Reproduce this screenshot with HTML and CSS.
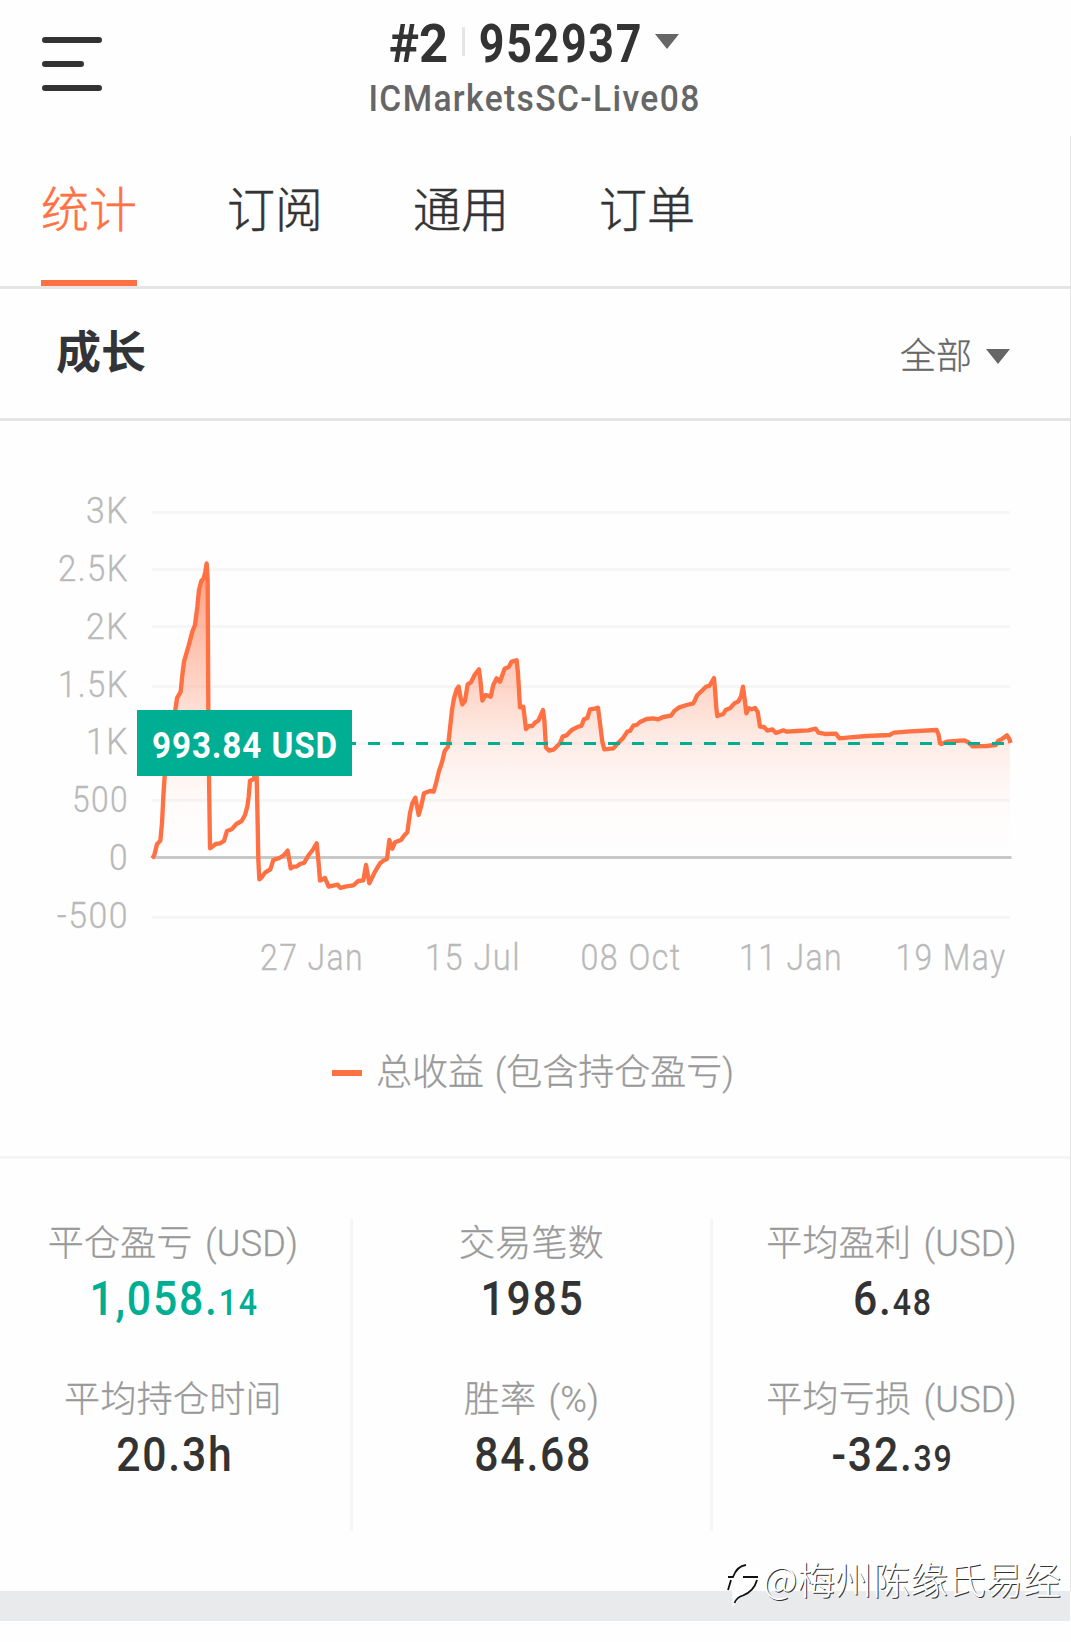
FILE: index.html
```html
<!DOCTYPE html>
<html lang="zh-CN">
<head>
    <meta charset="UTF-8">
    <meta name="viewport" content="width=device-width, initial-scale=1.0">
    <title>ICMarketsSC-Live08</title>
    <link rel="stylesheet" href="styles.css">
</head>
<body>
    <header class="topbar">
        <svg class="menu-icon" width="60" height="54" viewBox="0 0 60 54">
            <path d="M3 3H57M3 27H39M3 51H57"/>
        </svg>
        <div class="account">
            <h1 class="account-title">
                <span class="rank"><span class="din">#2</span></span>
                <i class="bar"></i>
                <span class="number"><span class="din">952937</span></span>
                <svg class="arrow" width="24" height="15" viewBox="0 0 24 15"><path d="M0 0H24L12 15Z"/></svg>
            </h1>
            <p class="server"><span class="din">ICMarketsSC-Live08</span></p>
        </div>
    </header>
    <main>
        <nav class="tabs">
            <a class="tab active">统计</a>
            <a class="tab">订阅</a>
            <a class="tab">通用</a>
            <a class="tab">订单</a>
        </nav>
        <section class="growth-head">
            <h2>成长</h2>
            <div class="period">
                <span>全部</span>
                <svg class="arrow" width="24" height="15" viewBox="0 0 24 15"><path d="M0 0H24L12 15Z"/></svg>
            </div>
        </section>
        <section class="growth">
            <svg class="chart" width="1070" height="579" viewBox="0 421 1070 579">
                <defs>
                    <linearGradient id="fade" gradientUnits="userSpaceOnUse" x1="0" y1="70" x2="0" y2="952">
                        <stop offset="0" stop-color="#ff7143" stop-opacity=".68"/>
                        <stop offset=".3" stop-color="#ff7143" stop-opacity=".4"/>
                        <stop offset=".6" stop-color="#ff7143" stop-opacity=".13"/>
                        <stop offset=".82" stop-color="#ff7143" stop-opacity=".02"/>
                        <stop offset="1" stop-color="#ff7143" stop-opacity="0"/>
                    </linearGradient>
                    <clipPath id="above"><rect x="330" y="0" width="2580" height="952"/></clipPath>
                </defs>
                <path class="grid" d="M152 512.5H1010M152 569.5H1010M152 626.5H1010M152 686.5H1010M152 743.5H1010M152 800.5H1010M152 917.5H1010"/>
                <path class="zero" d="M152 857.5H1011.5"/>
                <g class="axis axis-y">
                    <text x="129" y="523" textLength="43" lengthAdjust="spacingAndGlyphs">3K</text>
                    <text x="129" y="581" textLength="71" lengthAdjust="spacingAndGlyphs">2.5K</text>
                    <text x="129" y="639" textLength="43" lengthAdjust="spacingAndGlyphs">2K</text>
                    <text x="129" y="697" textLength="71" lengthAdjust="spacingAndGlyphs">1.5K</text>
                    <text x="129" y="754" textLength="43" lengthAdjust="spacingAndGlyphs">1K</text>
                    <text x="129" y="812" textLength="57" lengthAdjust="spacingAndGlyphs">500</text>
                    <text x="129" y="870" textLength="20" lengthAdjust="spacingAndGlyphs">0</text>
                    <text x="129" y="928" textLength="72" lengthAdjust="spacingAndGlyphs">-500</text>
                </g>
                <g class="axis axis-x">
                    <text x="312" y="970" textLength="104" lengthAdjust="spacingAndGlyphs">27 Jan</text>
                    <text x="473" y="970" textLength="96" lengthAdjust="spacingAndGlyphs">15 Jul</text>
                    <text x="631" y="970" textLength="101" lengthAdjust="spacingAndGlyphs">08 Oct</text>
                    <text x="791" y="970" textLength="104" lengthAdjust="spacingAndGlyphs">11 Jan</text>
                    <text x="951" y="970" textLength="111" lengthAdjust="spacingAndGlyphs">19 May</text>
                </g>
                <g transform="translate(40 540) scale(.33333)">
                    <path id="area" clip-path="url(#above)" fill="url(#fade)"/>
                    <path id="line" class="line"/>
                </g>
                <path class="current" d="M344 743.5H1005"/>
                <rect class="flag" x="137" y="710" width="215" height="66"/>
                <text class="flag-text" x="152" y="758" textLength="186" lengthAdjust="spacingAndGlyphs">993.84 USD</text>
            </svg>
            <div class="legend"><i></i>总收益 (包含持仓盈亏)</div>
        </section>
        <section class="stats">
            <div class="col">
                <div class="label">平仓盈亏 (USD)</div>
                <div class="value green"><span class="din">1,058.<small>14</small></span></div>
                <div class="label">平均持仓时间</div>
                <div class="value"><span class="din">20.3h</span></div>
            </div>
            <div class="col">
                <div class="label">交易笔数</div>
                <div class="value"><span class="din">1985</span></div>
                <div class="label">胜率 (%)</div>
                <div class="value"><span class="din">84.68</span></div>
            </div>
            <div class="col">
                <div class="label">平均盈利 (USD)</div>
                <div class="value"><span class="din">6.<small>48</small></span></div>
                <div class="label">平均亏损 (USD)</div>
                <div class="value"><span class="din">-32.<small>39</small></span></div>
            </div>
        </section>
    </main>
    <footer></footer>
    <div class="watermark">
        <svg width="38" height="46" viewBox="0 0 38 46">
            <path class="wm-light" d="M1 29L5 18M11 17Q15 6 24 5Q32 8 33 14M10 20H30Q27 29 16 33L10 40Z"/>
            <path class="wm-dark" d="M3 30L6 20M3 17H8Q12 6 21 5M18 17H33M32 20Q29 31 18 35.500Q12 37 9.500 43"/>
        </svg>
        <span>@梅州陈缘氏易经</span>
    </div>
    <script src="chart.js"></script>
</body>
</html>
```
FILE: styles.css
```css
* {
    box-sizing: border-box;
}

body {
    width: 1071px;
    height: 1642px;
    margin: 0;
    position: relative;
    overflow: hidden;
    background-color: #fefefe;
    color: #333;
    font-family: Roboto, "Noto Sans CJK SC", sans-serif;
}

h1, h2, p {
    margin: 0;
}

.din {
    display: inline-block;
    white-space: nowrap;
}

.topbar {
    height: 136px;
    padding: 0 42px;
    display: grid;
    grid-template-columns: 60px 1fr 60px;
}

.menu-icon {
    margin-top: 37px;
    fill: none;
    stroke: #333;
    stroke-width: 6;
    stroke-linecap: round;
}

.account {
    padding-top: 16px;
}

.account-title {
    height: 56px;
    padding-right: 3px;
    display: flex;
    justify-content: center;
    font-size: 54px;
    line-height: 56px;
    font-weight: 700;
}

.rank, .number {
    display: flex;
    justify-content: center;
    width: 59px;
}

.number {
    width: 162px;
}

.rank .din {
    transform: scaleX(.94);
}

.number .din {
    letter-spacing: 2px;
    transform: scaleX(.83);
}

.bar {
    width: 3px;
    height: 29px;
    margin: 11px 15px 0 14px;
    background-color: #e5e5e5;
}

.arrow {
    fill: #666;
}

.account-title .arrow {
    margin: 18px 0 0 13px;
}

.server {
    font-size: 36.5px;
    line-height: 42px;
    margin-top: 6px;
    padding-right: 2px;
    text-align: center;
    color: #666;
    font-weight: 500;
}

.server .din {
    letter-spacing: 1.5px;
    transform: scaleX(.92);
}

main {
    height: 1455px;
    border-right: 1px solid #e5e5e5;
}

.tabs {
    height: 153px;
    padding-left: 41px;
    display: flex;
    gap: 90px;
    border-bottom: 3px solid #e5e5e5;
}

.tab {
    height: 150px;
    padding-top: 40px;
    font-size: 48px;
    line-height: 70px;
    font-weight: 300;
    -webkit-text-stroke: .5px;
}

.tab.active {
    color: #ff7143;
    border-bottom: 6px solid #ff7143;
}

.growth-head {
    height: 132px;
    padding: 0 60px 0 56px;
    display: flex;
    justify-content: space-between;
    border-bottom: 3px solid #e5e5e5;
}

.growth-head h2 {
    padding-top: 32px;
    font-size: 45px;
    line-height: 66px;
    font-weight: 700;
    color: #333438;
}

.period {
    padding-top: 42px;
    display: flex;
    font-size: 36px;
    line-height: 52px;
    font-weight: 300;
    color: #666;
    -webkit-text-stroke: .3px;
}

.period .arrow {
    margin: 18px 0 0 14px;
}

.growth {
    height: 738px;
    border-bottom: 3px solid #f4f5f7;
}

.chart {
    display: block;
}

.grid, .zero {
    fill: none;
    stroke: #f6f6f7;
    stroke-width: 3;
}

.zero {
    stroke: #c8c8c8;
}

.axis {
    font-size: 36.5px;
    font-weight: 300;
    letter-spacing: 1.6px;
    fill: #b9b9b9;
    stroke: #b9b9b9;
    stroke-width: .3;
}

.axis-y {
    text-anchor: end;
}

.axis-x {
    text-anchor: middle;
}

.line {
    fill: none;
    stroke: #ff7143;
    stroke-width: 13;
    stroke-linejoin: round;
}

.current {
    stroke: #00ae93;
    stroke-width: 3;
    stroke-dasharray: 12 12;
}

.flag {
    fill: #00ae93;
}

.flag-text {
    font-size: 36.5px;
    font-weight: 700;
    letter-spacing: 1px;
    fill: #fff;
}

.legend {
    padding: 47px 4px 0 0;
    display: flex;
    align-items: center;
    justify-content: center;
    font-size: 36px;
    line-height: 52px;
    font-weight: 300;
    word-spacing: 2px;
    color: #999;
    -webkit-text-stroke: .3px;
}

.legend i {
    width: 30px;
    height: 6px;
    margin-right: 14px;
    background-color: #ff7143;
}

.stats {
    height: 432px;
    padding-top: 60px;
    display: grid;
    grid-template-columns: 353px 360px 1fr;
}

.col {
    height: 312px;
    text-align: center;
    border-right: 3px solid #f6f6f6;
}

.col:first-child {
    padding-right: 4px;
}

.col:last-child {
    border-right: none;
}

.label {
    height: 50px;
    font-size: 36px;
    line-height: 50px;
    font-weight: 300;
    letter-spacing: .3px;
    word-spacing: 3px;
    color: #999;
    -webkit-text-stroke: .3px;
}

.value {
    height: 106px;
    padding: 2px 0 0 3px;
    font-size: 48px;
    line-height: 56px;
    font-weight: 500;
}

.value small {
    font-size: 36px;
}

.value .din {
    letter-spacing: 2px;
    transform: scaleX(.89);
}

.green {
    color: #00ae93;
}

footer {
    width: 1070px;
    height: 30px;
    background-color: #e9eaec;
}

/* stamp over the bottom right corner */
.watermark {
    position: absolute;
    right: 10px;
    bottom: 34px;
    display: flex;
    align-items: center;
    font: 300 37.7px/60px "Noto Sans CJK SC", sans-serif;
    color: #fff;
    text-shadow: 1px 1px 0 #333;
}

.watermark svg {
    margin-top: 9px;
    fill: none;
}

.wm-dark {
    stroke: #111;
    stroke-width: 1.8;
}

.wm-light {
    stroke: #fff;
    stroke-width: 5;
}
```
FILE: chart.js
```js
// equity curve, 3 units per pixel, zero line at y = 952
const curve = `337,955 343,945 351,913 361,902 366,850 370,770 374,708 388,600 406,510 411,475 422,455
427,405 432,365 446,317 457,275 465,255 472,200 477,150 484,123 491,115 496,95 500,70 503,120 505,510
507,708 510,925 517,920 527,912 540,910 552,903 561,873 575,868 589,852 605,843 615,825 622,800 626,770
630,722 640,718 646,700 650,708 652,800 655,960 658,1018 665,1012 675,998 691,988 700,960 718,954
731,946 743,932 752,985 760,980 770,980 780,972 793,968 806,945 818,930 830,910 835,960 840,1022
855,1014 866,1040 880,1037 893,1034 901,1044 915,1040 940,1036 955,1023 970,1021 978,975 988,1030
1005,995 1020,970 1032,961 1041,957 1048,900 1057,926 1065,907 1083,900 1092,887 1102,877 1110,820
1117,790 1126,773 1136,825 1143,800 1152,760 1170,753 1181,755 1188,730 1197,693 1206,667 1214,633
1224,620 1230,565 1236,510 1242,475 1250,448 1256,440 1261,470 1267,493 1275,483 1283,433 1293,427
1305,403 1317,388 1321,420 1327,482 1337,465 1352,470 1360,435 1370,415 1380,425 1387,405 1394,386
1406,381 1415,365 1430,361 1434,400 1440,502 1450,500 1458,567 1467,558 1477,558 1485,548 1495,542
1509,510 1513,540 1518,623 1528,632 1542,628 1560,610 1568,590 1580,586 1595,570 1615,560 1624,558
1632,538 1642,534 1650,508 1665,506 1674,503 1680,550 1687,605 1693,628 1720,625 1735,608 1750,593
1762,575 1770,573 1780,557 1790,555 1800,546 1820,537 1840,535 1855,538 1870,531 1893,527 1903,513
1918,502 1940,495 1960,490 1972,465 1985,453 1998,440 2008,438 2022,414 2026,460 2029,505 2032,528
2050,522 2057,510 2070,505 2083,490 2095,484 2103,470 2109,440 2115,485 2119,520 2127,505 2135,508
2145,504 2153,515 2160,560 2172,561 2182,572 2197,568 2208,579 2230,571 2240,575 2270,573 2305,571
2327,566 2335,578 2355,582 2388,581 2398,595 2430,592 2480,588 2548,585 2562,578 2610,574 2690,570
2696,585 2700,610 2704,612 2720,605 2772,601 2785,607 2797,619 2840,618 2867,615 2875,602 2885,598
2901,586 2907,595 2912,609`;

document.getElementById('line').setAttribute('d', 'M' + curve);
document.getElementById('area').setAttribute('d', 'M' + curve + ' V952 H337 Z');
```
